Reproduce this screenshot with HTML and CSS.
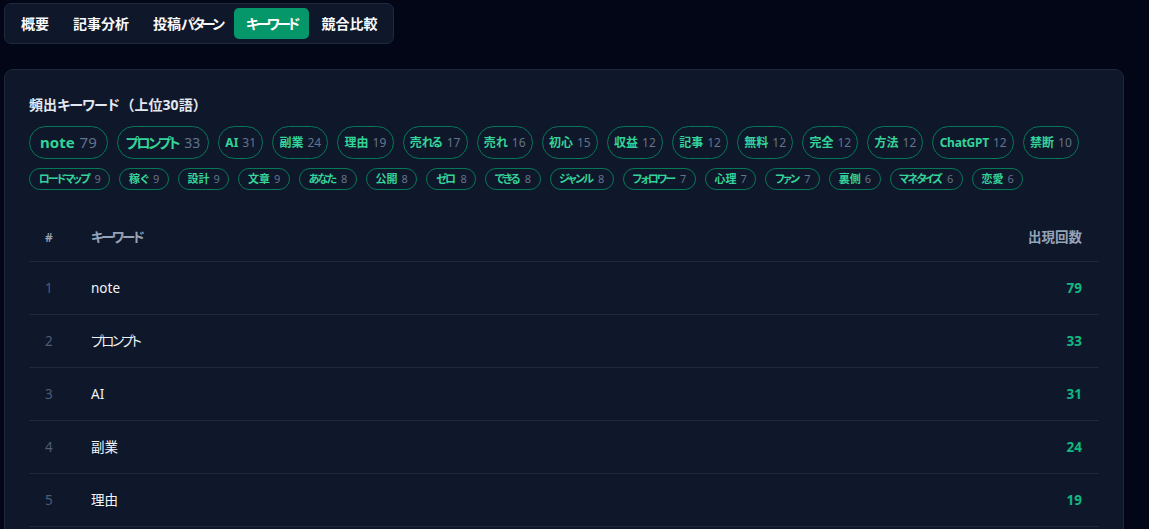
FILE: index.html
```html
<!DOCTYPE html>
<html lang="ja">
<head>
<meta charset="utf-8">
<title>キーワード</title>
<link rel="stylesheet" href="styles.css">
</head>
<body>
<div class="page">
  <nav class="tabs">
    <button class="tab">概要</button>
    <button class="tab">記事分析</button>
    <button class="tab">投稿<span class="k">パターン</span></button>
    <button class="tab active"><span class="k">キーワード</span></button>
    <button class="tab">競合比較</button>
  </nav>

  <section class="card">
    <h2 class="card-title">頻出<span class="k">キーワード</span>（上位30語）</h2>
    <div class="chips">
      <span class="chip s1"><b>note</b><i>79</i></span>
      <span class="chip s2"><b class="k">プロンプト</b><i>33</i></span>
      <span class="chip s3"><b>AI</b><i>31</i></span>
      <span class="chip s3"><b>副業</b><i>24</i></span>
      <span class="chip s3"><b>理由</b><i>19</i></span>
      <span class="chip s3"><b>売<span class="k">れる</span></b><i>17</i></span>
      <span class="chip s3"><b>売<span class="k">れ</span></b><i>16</i></span>
      <span class="chip s3"><b>初心</b><i>15</i></span>
      <span class="chip s3"><b>収益</b><i>12</i></span>
      <span class="chip s3"><b>記事</b><i>12</i></span>
      <span class="chip s3"><b>無料</b><i>12</i></span>
      <span class="chip s3"><b>完全</b><i>12</i></span>
      <span class="chip s3"><b>方法</b><i>12</i></span>
      <span class="chip s3"><b class="lat">ChatGPT</b><i>12</i></span>
      <span class="chip s3"><b>禁断</b><i>10</i></span>
      <span class="chip s4"><b class="k">ロードマップ</b><i>9</i></span>
      <span class="chip s4"><b>稼<span class="k">ぐ</span></b><i>9</i></span>
      <span class="chip s4"><b>設計</b><i>9</i></span>
      <span class="chip s4"><b>文章</b><i>9</i></span>
      <span class="chip s4"><b class="k">あなた</b><i>8</i></span>
      <span class="chip s4"><b>公開</b><i>8</i></span>
      <span class="chip s4"><b class="k">ゼロ</b><i>8</i></span>
      <span class="chip s4"><b class="k">できる</b><i>8</i></span>
      <span class="chip s4"><b class="k">ジャンル</b><i>8</i></span>
      <span class="chip s4"><b class="k">フォロワー</b><i>7</i></span>
      <span class="chip s4"><b>心理</b><i>7</i></span>
      <span class="chip s4"><b class="k">ファン</b><i>7</i></span>
      <span class="chip s4"><b>裏側</b><i>6</i></span>
      <span class="chip s4"><b class="k">マネタイズ</b><i>6</i></span>
      <span class="chip s4"><b>恋愛</b><i>6</i></span>
    </div>

    <table class="kw-table">
      <thead>
        <tr><th class="c-rank">#</th><th class="c-word"><span class="k">キーワード</span></th><th class="c-count">出現回数</th></tr>
      </thead>
      <tbody>
        <tr><td class="c-rank">1</td><td class="c-word">note</td><td class="c-count">79</td></tr>
        <tr><td class="c-rank">2</td><td class="c-word"><span class="k">プロンプト</span></td><td class="c-count">33</td></tr>
        <tr><td class="c-rank">3</td><td class="c-word">AI</td><td class="c-count">31</td></tr>
        <tr><td class="c-rank">4</td><td class="c-word">副業</td><td class="c-count">24</td></tr>
        <tr><td class="c-rank">5</td><td class="c-word">理由</td><td class="c-count">19</td></tr>
        <tr><td class="c-rank">6</td><td class="c-word">売<span class="k">れる</span></td><td class="c-count">17</td></tr>
      </tbody>
    </table>
  </section>
</div>
</body>
</html>
```

FILE: styles.css
```css
* { box-sizing: border-box; }

html, body {
  margin: 0;
  background: #020617;
  color: #e2e8f0;
  font-family: "Noto Sans", "Noto Sans CJK JP", sans-serif;
  font-feature-settings: "palt";
  overflow: hidden;
}

.k { letter-spacing: -0.17em; }

.page {
  padding: 3px 25px 0 4px;
}

.tabs {
  display: inline-flex;
  padding: 4px;
  background: #0f172a;
  border: 1px solid #1e293b;
  border-radius: 7px;
}

.tab {
  font: inherit;
  font-feature-settings: "palt";
  font-size: 14px;
  font-weight: 700;
  line-height: 19px;
  color: #f8fafc;
  background: transparent;
  border: 0;
  border-radius: 5px;
  padding: 6px 12px;
}

.tab .k { letter-spacing: -0.2em; }

.tab.active {
  background: #059669;
  color: #ffffff;
}

.card {
  margin-top: 25px;
  background: #0f172a;
  border: 1px solid #1e293b;
  border-radius: 9px;
  padding: 25px 24px 0 24px;
}

.card-title {
  margin: 0 0 11px;
  font-size: 14px;
  line-height: 20px;
  font-weight: 700;
  color: #e2e8f0;
  font-feature-settings: normal;
}

.card-title .k { letter-spacing: -0.12em; margin-right: 2px; }

.chips {
  display: flex;
  flex-wrap: wrap;
  gap: 9px;
}

.chip {
  display: inline-flex;
  align-items: center;
  gap: 4px;
  border: 1px solid #047857;
  border-radius: 999px;
  padding: 2px 6.2px;
  line-height: 16px;
}

.chip b {
  font-weight: 700;
  color: #34d399;
}

.chip b.k, .chip b .k { margin-right: 2px; }

.chip b.lat { letter-spacing: -0.02em; }

.chip i {
  font-style: normal;
  font-weight: 400;
  color: #64748b;
}

.s1 { font-size: 15px; line-height: 21px; padding: 5px 10px; gap: 5px; }
.s2 { font-size: 14px; line-height: 20px; padding: 5px 8px; }
.s3 { font-size: 12px; }
.s4 { font-size: 11px; padding: 2px 8.6px; }

.kw-table {
  width: 100%;
  margin-top: 24px;
  border-collapse: collapse;
}

.kw-table th {
  font-size: 13.5px;
  font-weight: 600;
  color: #94a3b8;
  text-align: left;
  padding: 14px 16px;
  line-height: 19px;
  border-bottom: 1px solid #1e293b;
}

.kw-table td {
  font-size: 13.5px;
  line-height: 20px;
  padding: 16px 16px;
  border-bottom: 1px solid #1e293b;
}

.kw-table .c-rank {
  width: 62px;
  padding-right: 0;
  color: #4b5d79;
}

.kw-table th.c-rank { color: #94a3b8; font-size: 12px; }

.kw-table .c-word {
  padding-left: 0;
  color: #f1f5f9;
}

.kw-table th.c-word { color: #94a3b8; }

.kw-table .c-count {
  text-align: right;
  padding-right: 17px;
}

.kw-table td.c-count {
  color: #10b981;
  font-weight: 700;
}
```
